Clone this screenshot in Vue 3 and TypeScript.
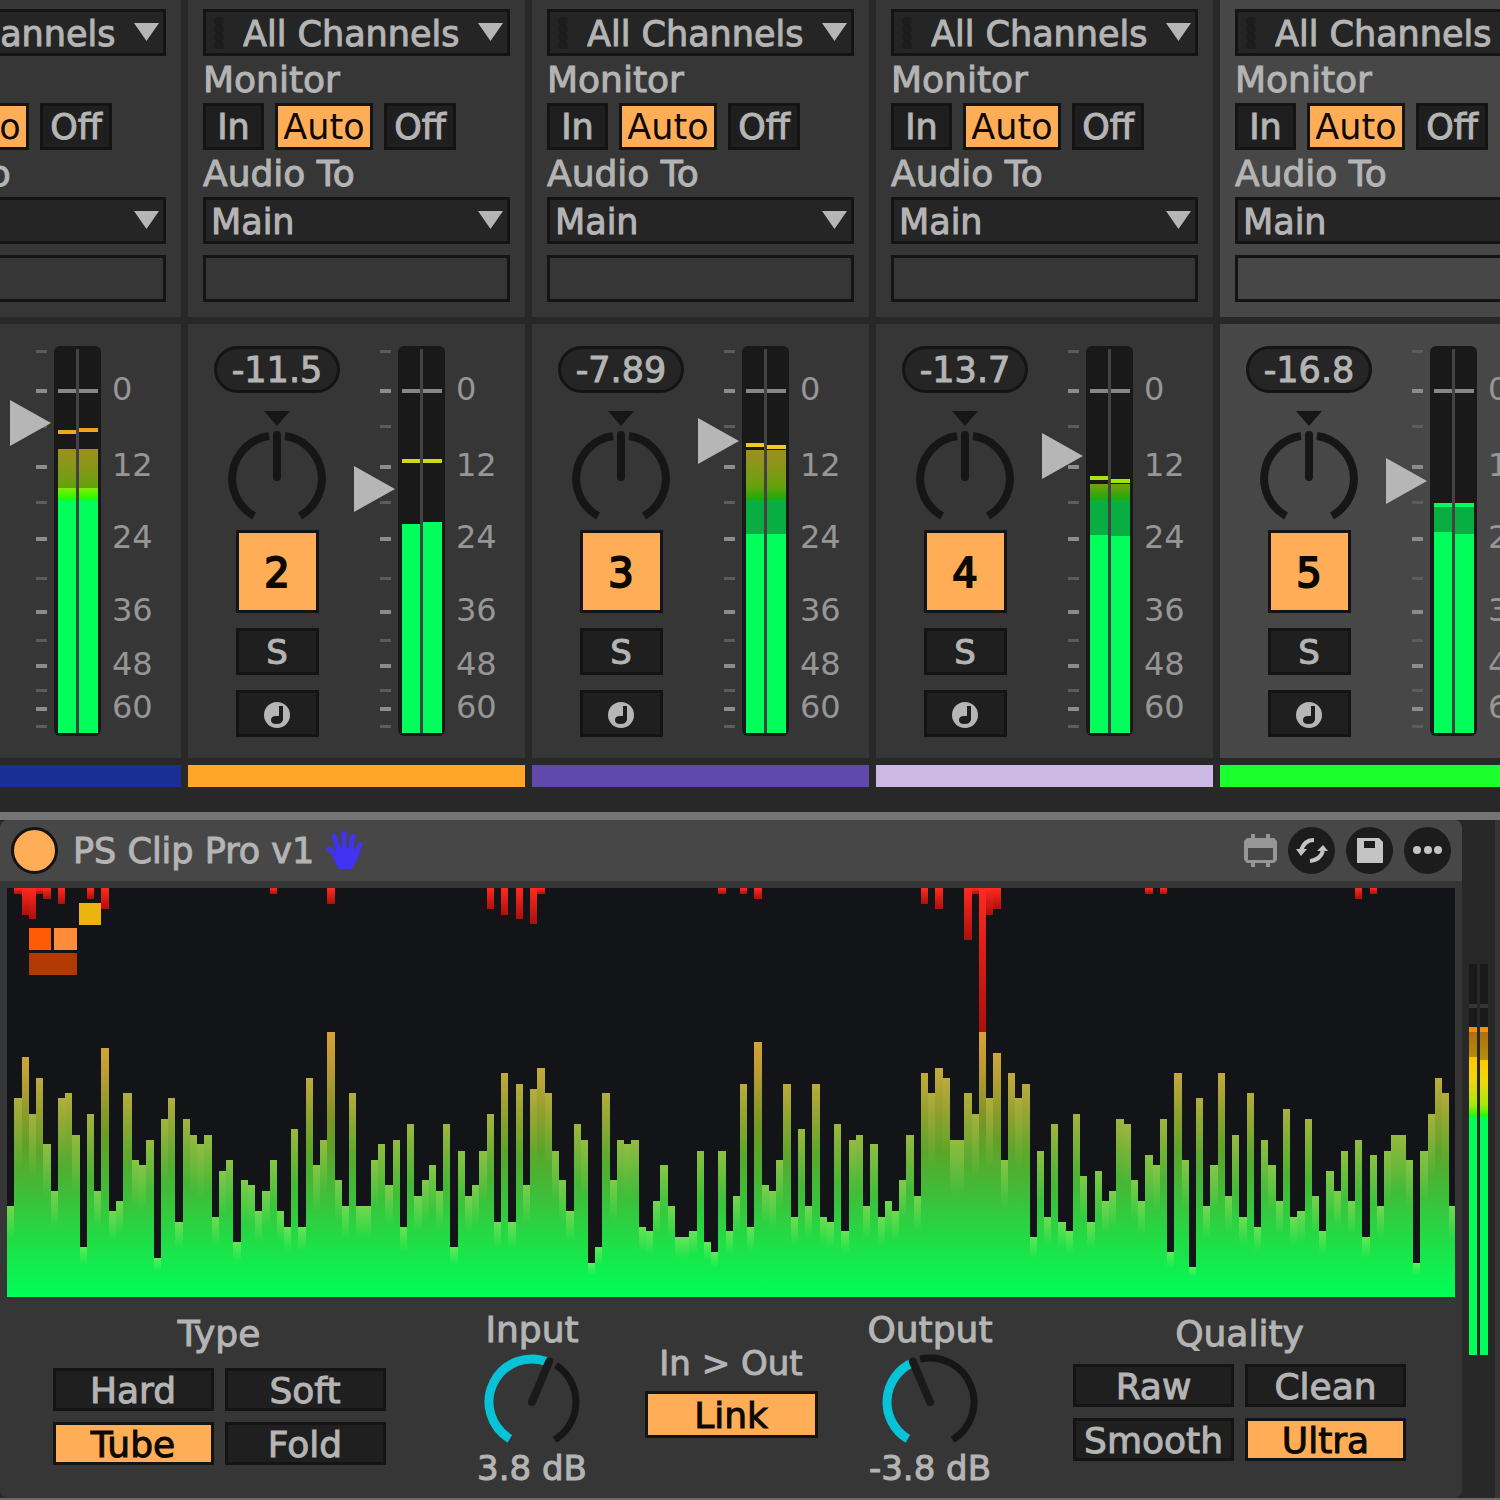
<script setup lang="ts">
import { reactive, ref } from 'vue'

interface Channel { level: number; peak: number; hold: number }
interface Track {
  id: number
  gain: string
  fader: number
  color: string
  selected?: boolean
  monitor: string
  on: boolean
  left: Channel
  right: Channel
}

const METER_BOTTOM = 387

// level, peak and hold are distances in pixels from the top of the meter
const tracks = reactive<Track[]>([
  { id: 1, gain: '-7.20', fader: 313, color: '#182f95', monitor: 'Auto', on: true, left: { level: 142, peak: 103, hold: 84 }, right: { level: 142, peak: 103, hold: 82 } },
  { id: 2, gain: '-11.5', fader: 247, color: '#ffa629', monitor: 'Auto', on: true, left: { level: 178, peak: 178, hold: 113 }, right: { level: 176, peak: 176, hold: 113 } },
  { id: 3, gain: '-7.89', fader: 295, color: '#6149ab', monitor: 'Auto', on: true, left: { level: 188, peak: 104, hold: 97 }, right: { level: 188, peak: 104, hold: 99 } },
  { id: 4, gain: '-13.7', fader: 280, color: '#cbb8e3', monitor: 'Auto', on: true, left: { level: 189, peak: 138, hold: 130 }, right: { level: 190, peak: 138, hold: 133 } },
  { id: 5, gain: '-16.8', fader: 255, color: '#1bff2c', selected: true, monitor: 'Auto', on: true, left: { level: 186, peak: 159, hold: 157 }, right: { level: 188, peak: 159, hold: 157 } },
])

const monitorModes = ['In', 'Auto', 'Off']
const majorTicks = [43, 119, 191, 264, 318, 361]
const minorTicks = [4, 79, 155, 231, 293, 343, 379]
const scale = [
  { db: 0, y: 42 },
  { db: 12, y: 118 },
  { db: 24, y: 190 },
  { db: 36, y: 263 },
  { db: 48, y: 317 },
  { db: 60, y: 360 },
]

const levels = [
  91, 199, 240, 183, 219, 153, 106, 199, 204, 162, 50, 183, 106, 249, 86, 96, 204, 137, 132, 157,
  39, 178, 199, 75, 178, 162, 153, 162, 80, 126, 137, 55, 117, 112, 86, 106, 137, 86, 70, 168,
  70, 219, 132, 157, 265, 117, 91, 204, 91, 91, 137, 153, 112, 157, 70, 173, 101, 117, 132, 106,
  173, 50, 146, 101, 112, 146, 183, 75, 224, 75, 213, 112, 208, 229, 204, 146, 117, 86, 173, 157,
  34, 50, 204, 117, 157, 153, 157, 70, 66, 96, 132, 91, 60, 60, 66, 146, 55, 45, 146, 66,
  101, 213, 70, 255, 112, 106, 137, 213, 80, 168, 91, 213, 80, 75, 173, 66, 157, 162, 91, 153,
  80, 96, 86, 117, 162, 101, 224, 204, 229, 219, 157, 157, 204, 183, 265, 199, 244, 137, 224, 199,
  213, 60, 146, 80, 173, 75, 66, 183, 121, 75, 126, 96, 106, 178, 173, 117, 96, 142, 132, 178,
  45, 224, 137, 30, 199, 91, 132, 224, 101, 162, 80, 204, 70, 157, 132, 96, 188, 80, 86, 178,
  101, 66, 126, 106, 146, 96, 157, 60, 142, 91, 146, 162, 162, 137, 34, 146, 183, 219, 204, 91,
]
const clips: [number, number][] = [
  [1, 6], [2, 27], [3, 31], [4, 6], [5, 11], [7, 16], [11, 11], [13, 21], [36, 6], [44, 16],
  [66, 21], [68, 27], [70, 31], [72, 36], [73, 6], [98, 6], [101, 6], [103, 11], [126, 16],
  [128, 21], [132, 52], [133, 6], [134, 144], [135, 27], [136, 21], [157, 6], [159, 6],
  [186, 11], [188, 6],
]
const PLOT_HEIGHT = 409
const barX = (i: number) => (i < 17 ? i * 7.25 : 125 + (i - 17) * 7.238)
const barWidth = (i: number) => barX(i + 1) - barX(i)

const clipTypes = ['Hard', 'Soft', 'Tube', 'Fold']
const qualities = ['Raw', 'Clean', 'Smooth', 'Ultra']
const clipType = ref('Tube')
const quality = ref('Ultra')
const linked = ref(true)
const active = ref(true)

// Point on a dial face, angle measured clockwise from twelve o'clock
function point(deg: number, r: number): string {
  const a = (deg * Math.PI) / 180
  return `${(49 + r * Math.sin(a)).toFixed(2)} ${(52 - r * Math.cos(a)).toFixed(2)}`
}
function arc(from: number, to: number, r: number): string {
  return `M${point(from, r)}A${r} ${r} 0 ${to - from > 180 ? 1 : 0} 1 ${point(to, r)}`
}
const dials = [
  { name: 'Input', text: '3.8 dB', value: 3.8, angle: 23, gap: 10 },
  { name: 'Output', text: '-3.8 dB', value: -3.8, angle: -23, gap: 10 },
]
</script>

<template>
  <main class="app">
    <svg class="defs" aria-hidden="true">
      <defs>
        <linearGradient id="meterFill" gradientUnits="userSpaceOnUse" x1="0" y1="0" x2="0" y2="390">
          <stop offset="0.1" stop-color="#ff6a10" />
          <stop offset="0.215" stop-color="#eda41c" />
          <stop offset="0.255" stop-color="#eccb22" />
          <stop offset="0.3" stop-color="#cbd91c" />
          <stop offset="0.36" stop-color="#92ea08" />
          <stop offset="0.393" stop-color="#1efa00" />
          <stop offset="0.398" stop-color="#00ff5a" />
        </linearGradient>
        <linearGradient id="deviceFill" gradientUnits="userSpaceOnUse" x1="0" y1="144" x2="0" y2="535">
          <stop offset="0.16" stop-color="#f58a10" />
          <stop offset="0.25" stop-color="#ffcb00" />
          <stop offset="0.3" stop-color="#efd80c" />
          <stop offset="0.36" stop-color="#a8e80c" />
          <stop offset="0.388" stop-color="#24f800" />
          <stop offset="0.394" stop-color="#00ff5a" />
        </linearGradient>
        <linearGradient id="plotFill" gradientUnits="userSpaceOnUse" x1="0" y1="144" x2="0" y2="409">
          <stop offset="0" stop-color="#c87818" />
          <stop offset="0.15" stop-color="#a88420" />
          <stop offset="0.3" stop-color="#809020" />
          <stop offset="0.45" stop-color="#5ba52a" />
          <stop offset="0.62" stop-color="#3dbf3a" />
          <stop offset="0.78" stop-color="#22dc45" />
          <stop offset="1" stop-color="#00ff59" />
        </linearGradient>
        <linearGradient id="barShine" x1="0" y1="0" x2="0" y2="1">
          <stop offset="0" stop-color="#ffff80" stop-opacity="0.3" />
          <stop offset="0.35" stop-color="#ffff80" stop-opacity="0" />
        </linearGradient>
        <linearGradient id="clipFill" x1="0" y1="0" x2="0" y2="1">
          <stop offset="0" stop-color="#ff2a20" />
          <stop offset="1" stop-color="#ac100c" />
        </linearGradient>
      </defs>
    </svg>

    <section class="mixer" aria-label="Mixer">
      <article v-for="t in tracks" :key="t.id" class="track" :class="{ selected: t.selected }">
        <div class="routing">
          <div class="drop">
            <select class="field channels" :aria-label="`Input channel ${t.id}`"><option>All Channels</option></select>
            <svg class="grip" width="11" height="32" viewBox="0 0 11 32" aria-hidden="true">
              <circle v-for="y in [4, 12, 20, 28]" :key="y" cx="5" :cy="y" r="5" fill="#1d1d1d" />
            </svg>
            <svg class="arrow" width="25" height="18" aria-hidden="true"><path d="M0 0H25L12.5 18Z" fill="#b6b6b6" /></svg>
          </div>
          <div class="caption">Monitor</div>
          <div class="modes">
            <button
              v-for="m in monitorModes"
              :key="m"
              type="button"
              class="key"
              :class="[m.toLowerCase(), { lit: t.monitor === m }]"
              :aria-pressed="t.monitor === m"
              @click="t.monitor = m"
            >{{ m }}</button>
          </div>
          <label class="caption" :for="`out-${t.id}`">Audio To</label>
          <div class="drop">
            <select :id="`out-${t.id}`" class="field"><option>Main</option></select>
            <svg class="arrow" width="25" height="18" aria-hidden="true"><path d="M0 0H25L12.5 18Z" fill="#b6b6b6" /></svg>
          </div>
          <input class="blank" type="text" :aria-label="`Output channel ${t.id}`" />
        </div>

        <div class="channel">
          <div class="controls">
            <output class="gain">{{ t.gain }}</output>
            <div class="pan">
              <svg width="98" height="125" viewBox="0 0 98 125" fill="none" stroke="#161616" stroke-width="8" aria-hidden="true">
                <path d="M36 6H62L49 21Z" fill="#161616" stroke="none" />
                <path d="M41 31A43 43 0 0 0 26 111M57 31A43 43 0 0 1 72 111" />
                <path d="M49 30V72" stroke-linecap="round" />
              </svg>
              <input type="range" min="-50" max="50" :aria-label="`Pan ${t.id}`" />
            </div>
            <button type="button" class="key number" :class="{ lit: t.on }" :aria-pressed="t.on" @click="t.on = !t.on">{{ t.id }}</button>
            <button type="button" class="key small" :aria-label="`Solo ${t.id}`">S</button>
            <button type="button" class="key small" :aria-label="`Arm ${t.id}`">
              <svg width="26" height="26" viewBox="0 0 26 26" aria-hidden="true">
                <circle cx="13" cy="13" r="13" fill="#b6b6b6" />
                <path d="M15 4H19V17Q19 22 12 22Q7 22 7 18Q7 14 12 14H15Z" fill="#1e1e1e" />
              </svg>
            </button>
          </div>
          <div class="level">
            <svg width="150" height="390" viewBox="0 0 150 390" aria-hidden="true">
              <rect v-for="y in majorTicks" :key="y" x="26" :y="y" width="11" height="4" fill="#8c8c8c" />
              <rect v-for="y in minorTicks" :key="y" x="26" :y="y" width="11" height="3" fill="#5c5c5c" />
              <rect x="44" y="0" width="47" height="390" rx="6" fill="#191919" />
              <rect x="66" y="3" width="3" height="384" fill="#434343" />
              <g v-for="(c, i) in [t.left, t.right]" :key="i">
                <rect :x="i ? 69 : 48" y="43" :width="i ? 19 : 18" height="4" fill="#868686" />
                <rect :x="i ? 69 : 48" :y="c.peak" :width="i ? 19 : 18" :height="METER_BOTTOM - c.peak" fill="url(#meterFill)" opacity="0.65" />
                <rect :x="i ? 69 : 48" :y="c.level" :width="i ? 19 : 18" :height="METER_BOTTOM - c.level" fill="url(#meterFill)" />
                <rect :x="i ? 69 : 48" :y="c.hold" :width="i ? 19 : 18" height="4" fill="url(#meterFill)" />
              </g>
              <text v-for="s in scale" :key="s.db" x="102" :y="s.y + 12" font-size="32" fill="#969696">{{ s.db }}</text>
            </svg>
            <input v-model.number="t.fader" class="fader" type="range" min="0" max="390" :aria-label="`Volume ${t.id}`" />
          </div>
        </div>
        <div class="swatch" :style="{ background: t.color }"></div>
      </article>
    </section>

    <section class="rack">
      <article class="device">
        <header class="title">
          <button type="button" class="power" :class="{ off: !active }" aria-label="Device on" :aria-pressed="active" @click="active = !active"></button>
          <h1>PS Clip Pro v1</h1>
          <svg width="37" height="41" viewBox="0 0 37 41" fill="none" stroke="#4033f2" stroke-width="5" stroke-linecap="round" aria-hidden="true">
            <path d="M3 19L11 26M8 6L13 22M18 3V20M27 6L24 22M34 14L30 26" />
            <path d="M8 23L13 19H27L32 22L30 30L25 38H14L9 31Z" fill="#4033f2" stroke-width="2" stroke-linejoin="round" />
          </svg>
          <div class="tools">
            <svg width="33" height="33" viewBox="0 0 33 33" fill="#969696" aria-hidden="true">
              <path fill-rule="evenodd" d="M3 4H7V0H11V4H22V0H26V4H30L33 7V26L30 29H26V33H22V29H11V33H7V29H3L0 26V7ZM4 14V26H29V14Z" />
            </svg>
            <button type="button" class="round" aria-label="Reload">
              <svg width="47" height="47" viewBox="0 0 47 47" fill="none" stroke="#c4c4c4" stroke-width="4" aria-hidden="true">
                <path d="M26 13Q16 13 13 24M22 34Q32 33 35 24" />
                <path d="M8 22H19L13 29ZM29 24H40L35 18Z" fill="#c4c4c4" stroke="none" />
              </svg>
            </button>
            <button type="button" class="round" aria-label="Save">
              <svg width="47" height="47" viewBox="0 0 47 47" aria-hidden="true">
                <path fill="#c4c4c4" fill-rule="evenodd" d="M11 11H33L37 15V36H11ZM18 14V21H29V14Z" />
              </svg>
            </button>
            <button type="button" class="round" aria-label="More">
              <svg width="47" height="47" viewBox="0 0 47 47" fill="#c4c4c4" aria-hidden="true">
                <circle cx="13" cy="23" r="4" /><circle cx="24" cy="23" r="4" /><circle cx="34" cy="23" r="4" />
              </svg>
            </button>
          </div>
        </header>

        <div class="plot">
          <svg class="bars" viewBox="0 0 1448 409" preserveAspectRatio="none" shape-rendering="crispEdges" role="img" aria-label="Clipping history">
            <g v-for="(h, i) in levels" :key="i">
              <rect :x="barX(i)" :y="PLOT_HEIGHT - h" :width="barWidth(i)" :height="h" fill="url(#plotFill)" />
              <rect :x="barX(i)" :y="PLOT_HEIGHT - h" :width="barWidth(i)" :height="h" fill="url(#barShine)" />
            </g>
            <rect v-for="[i, d] in clips" :key="i" :x="barX(i)" y="0" :width="barWidth(i)" :height="d" fill="url(#clipFill)" />
          </svg>
          <svg class="logo" width="72" height="72" viewBox="0 0 72 72" aria-hidden="true">
            <rect x="50" width="22" height="22" fill="#ebb40f" />
            <rect y="25" width="22" height="22" fill="#ff5a05" />
            <rect x="25" y="25" width="23" height="22" fill="#ff8c38" />
            <rect y="50" width="48" height="22" fill="#b13a03" />
          </svg>
        </div>

        <div class="panel">
          <fieldset class="group type">
            <legend>Type</legend>
            <div class="grid">
              <button v-for="n in clipTypes" :key="n" type="button" class="key" :class="{ lit: clipType === n }" :aria-pressed="clipType === n" @click="clipType = n">{{ n }}</button>
            </div>
          </fieldset>
          <template v-for="(d, k) in dials" :key="d.name">
            <div class="dial" :class="{ last: k === 1 }">
              <label :for="d.name">{{ d.name }}</label>
              <div class="face">
                <svg width="98" height="98" viewBox="0 0 98 98" fill="none" aria-hidden="true">
                  <path :d="arc(d.angle + d.gap, 149, 44)" stroke="#161616" stroke-width="7" />
                  <path :d="arc(-149, d.angle, 43)" stroke="#06c3d8" stroke-width="9" />
                  <path :d="`M${point(d.angle, 44)}L49 52`" stroke="#1a1a1a" stroke-width="8" stroke-linecap="round" />
                </svg>
                <input :id="d.name" type="range" min="-24" max="24" step="0.1" :value="d.value" />
              </div>
              <output :for="d.name">{{ d.text }}</output>
            </div>
          </template>
          <div class="link">
            <label for="link">In &gt; Out</label>
            <button id="link" type="button" class="key" :class="{ lit: linked }" :aria-pressed="linked" @click="linked = !linked">Link</button>
          </div>
          <fieldset class="group quality">
            <legend>Quality</legend>
            <div class="grid">
              <button v-for="n in qualities" :key="n" type="button" class="key" :class="{ lit: quality === n }" :aria-pressed="quality === n" @click="quality = n">{{ n }}</button>
            </div>
          </fieldset>
        </div>
      </article>
      <svg class="output" width="33" height="677" viewBox="0 0 33 677" aria-hidden="true">
        <g v-for="(c, i) in [{ x: 7, y: 237 }, { x: 18, y: 240 }]" :key="i">
          <rect :x="c.x" y="144" width="8" height="391" fill="#1a1a1a" />
          <rect :x="c.x" y="184" width="8" height="4" fill="#363636" />
          <rect :x="c.x" y="207" width="8" height="328" fill="url(#deviceFill)" opacity="0.68" />
          <rect :x="c.x" y="207" width="8" height="5" fill="url(#deviceFill)" />
          <rect :x="c.x" :y="c.y" width="8" :height="535 - c.y" fill="url(#deviceFill)" />
        </g>
      </svg>
      <aside class="next"></aside>
    </section>
  </main>
</template>

<style>
body {
  margin: 0;
  background: #282828;
}
</style>

<style scoped>
* {
  box-sizing: border-box;
}
.app {
  overflow: hidden;
  background: #282828;
  color: #b4b4b4;
  font-family: "DejaVu Sans", sans-serif;
  font-size: 35px;
  -webkit-text-stroke: 1px currentColor;
}
.defs {
  position: absolute;
  width: 0;
  height: 0;
}
button,
select,
input {
  font: inherit;
  color: inherit;
  margin: 0;
  -webkit-text-stroke: inherit;
}
svg {
  display: block;
}

.mixer {
  display: flex;
  gap: 7px;
  width: calc(100% + 213px);
  margin-left: -156px;
  padding-bottom: 25px;
}
.track {
  --strip: #363636;
  display: flex;
  flex: 1 1 0;
  flex-direction: column;
  gap: 7px;
  min-width: 0;
}
.track.selected {
  --strip: #474747;
}
.routing {
  display: flex;
  flex-direction: column;
  padding: 9px 15px 15px;
  background: var(--strip);
}
.drop {
  position: relative;
}
.field {
  display: block;
  width: 100%;
  height: 47px;
  padding: 2px 36px 0 5px;
  border: 3px solid #141414;
  border-radius: 0;
  background: #252525;
  appearance: none;
  line-height: 41px;
}
.field.channels {
  padding-left: 37px;
}
.grip {
  position: absolute;
  top: 8px;
  left: 11px;
  pointer-events: none;
}
.arrow {
  position: absolute;
  top: 14px;
  right: 7px;
  pointer-events: none;
}
.caption {
  font-size: 36px;
  line-height: 47px;
}
.modes {
  display: flex;
  gap: 11px;
}
.key {
  display: flex;
  align-items: center;
  justify-content: center;
  height: 47px;
  padding: 2px 0 0;
  border: 3px solid #141414;
  border-radius: 0;
  background: #1f1f1f;
  line-height: 41px;
}
.key.lit {
  background: #ffad56;
  color: #0c0804;
}
.modes .key.lit {
  -webkit-text-stroke: 0;
}
.key.in {
  width: 61px;
}
.key.auto {
  width: 98px;
}
.key.off {
  width: 72px;
}
.blank {
  width: 100%;
  height: 47px;
  margin-top: 11px;
  padding: 0 5px;
  border: 3px solid #141414;
  background: transparent;
}

.channel {
  display: flex;
  justify-content: space-between;
  padding: 22px 21px 21px 26px;
  background: var(--strip);
}
.controls {
  display: flex;
  flex-direction: column;
  align-items: center;
  width: 126px;
}
.gain {
  width: 126px;
  height: 47px;
  border: 3px solid #141414;
  border-radius: 24px;
  background: #252525;
  line-height: 42px;
  text-align: center;
}
.pan {
  position: relative;
  margin-top: 12px;
}
.pan input,
.face input {
  position: absolute;
  inset: 0;
  width: 100%;
  height: 100%;
  opacity: 0;
}
.key.number {
  width: 83px;
  height: 83px;
  padding-top: 4px;
  font-size: 40px;
  -webkit-text-stroke-width: 2px;
}
.key.small {
  width: 83px;
  margin-top: 15px;
  font-size: 34px;
}
.level {
  position: relative;
  width: 150px;
  -webkit-text-stroke: 0;
}
.fader {
  position: absolute;
  top: -23px;
  left: 0;
  width: 41px;
  height: 436px;
  appearance: none;
  background: transparent;
  writing-mode: vertical-lr;
  direction: rtl;
}
.fader::-webkit-slider-thumb {
  width: 41px;
  height: 46px;
  border: 0;
  appearance: none;
  background: #b6b6b6;
  clip-path: polygon(0 0, 100% 50%, 0 100%);
}
.swatch {
  height: 22px;
}

.rack {
  display: flex;
  border-top: 8px solid #757575;
  border-bottom: 2px solid #6c6c6c;
}
.device {
  flex: 1;
  min-width: 0;
  border-radius: 8px;
  background: #363636;
}
.title {
  display: flex;
  align-items: center;
  height: 61px;
  padding: 0 11px;
  border-radius: 8px 8px 0 0;
  background: #474747;
}
.power {
  width: 47px;
  height: 47px;
  margin-right: 15px;
  padding: 0;
  border: 3px solid #141414;
  border-radius: 50%;
  background: #ffad56;
}
.power.off {
  background: #1f1f1f;
}
h1 {
  margin: 0 12px 0 0;
  font-size: 35px;
  font-weight: 400;
}
.tools {
  display: flex;
  align-items: center;
  gap: 11px;
  margin-left: auto;
}
.round {
  width: 47px;
  height: 47px;
  padding: 0;
  border: 0;
  border-radius: 50%;
  background: #1c1c1c;
}
.plot {
  position: relative;
  margin: 7px 7px 0;
  background: #131418;
}
.bars {
  width: 100%;
  height: 409px;
}
.logo {
  position: absolute;
  top: 15px;
  left: 22px;
}

.panel {
  display: grid;
  grid-template-columns: 438fr 188fr 210fr 188fr 431fr;
  height: 201px;
  padding-right: 7px;
  font-size: 36px;
}
.group {
  display: flex;
  flex-direction: column;
  align-items: center;
  min-width: 0;
  margin: 0;
  padding: 0;
  border: 0;
  grid-row: 1;
}
.group legend {
  width: 100%;
  padding: 14px 0 0;
  line-height: 46px;
  text-align: center;
}
.grid {
  display: grid;
  grid-template-columns: 161px 161px;
  gap: 11px;
  margin-top: 7px;
}
.type .grid {
  margin-top: 11px;
}
.grid .key {
  height: 43px;
  line-height: 35px;
}
.dial {
  display: flex;
  grid-row: 1;
  grid-column: 2;
  flex-direction: column;
  align-items: center;
  padding-top: 13px;
  line-height: 40px;
}
.dial.last {
  grid-column: 4;
}
.dial output {
  font-size: 34px;
}
.face {
  position: relative;
}
.link {
  display: flex;
  grid-row: 1;
  grid-column: 3;
  flex-direction: column;
  align-items: center;
  gap: 5px;
  padding-top: 43px;
  line-height: 46px;
}
.link label {
  font-size: 34px;
}
.link .key {
  width: 173px;
}
.quality {
  grid-column: 5;
}
.output {
  flex: none;
}
.next {
  width: 5px;
  background: #363636;
}
</style>
